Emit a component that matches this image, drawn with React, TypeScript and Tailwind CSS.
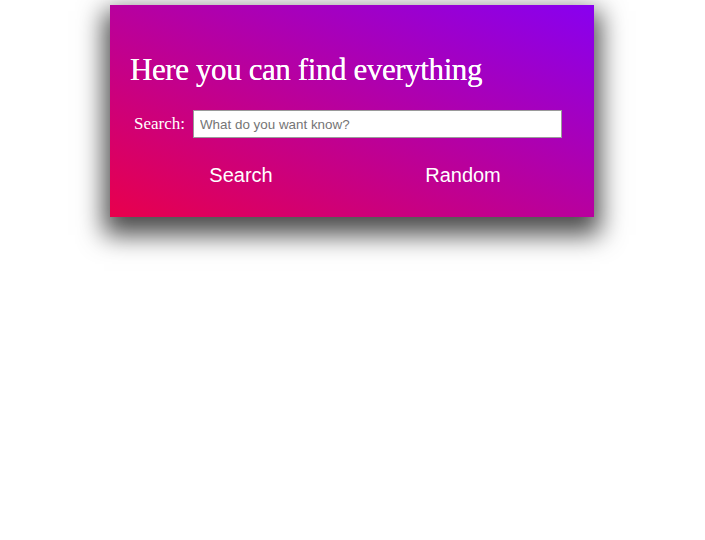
import { useState } from "react";

export default function App() {
  const [query, setQuery] = useState("");

  return (
    <main className="min-h-screen bg-white">
      <div className="ml-[110px] mt-[5px] w-[484px] bg-[linear-gradient(to_top_right,#e8004c,#8800f0)] px-5 pb-[30px] pt-[46px] text-white shadow-[0_12px_24px_6px_rgba(0,0,0,0.7)]">
        <h1 className="text-[31px] leading-[38px] font-['Liberation_Serif',serif] tracking-[-0.4px] [text-shadow:0_0_0.4px_#fff]">
          Here you can find everything
        </h1>

        <div className="mt-[21px] flex items-center gap-2">
          <label className="pl-[4px] text-[17px] font-['Liberation_Serif',serif]">Search:</label>
          <input
            value={query}
            onChange={(e) => setQuery(e.target.value)}
            placeholder="What do you want know?"
            className="h-[28px] w-[369px] border border-[#9a9a9a] bg-white px-[6px] text-[13.4px] text-black outline-none placeholder:text-[#757575] font-['Liberation_Sans',Arial,sans-serif]"
          />
        </div>

        <div className="mt-[25px] grid grid-cols-2">
          <button className="text-[20px] leading-[24px] font-['Liberation_Sans',Arial,sans-serif]">Search</button>
          <button className="text-[20px] leading-[24px] font-['Liberation_Sans',Arial,sans-serif]">Random</button>
        </div>
      </div>
    </main>
  );
}
